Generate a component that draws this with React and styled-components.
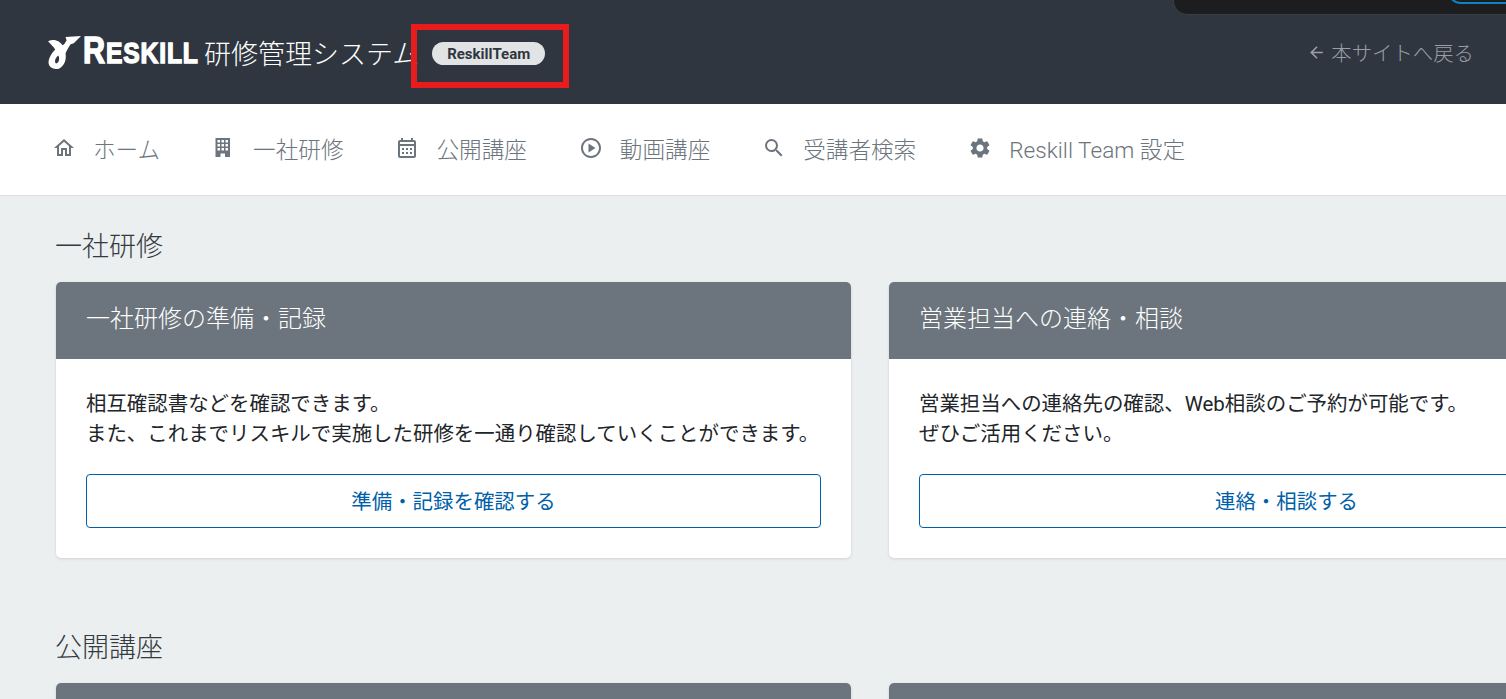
import styled, { createGlobalStyle } from "styled-components";
import { MdOutlineHome, MdOutlineCalendarMonth, MdOutlinePlayCircle, MdSearch, MdSettings, MdArrowBack } from "react-icons/md";

const GlobalStyle = createGlobalStyle`
    html, body {
        margin: 0;
        padding: 0;
        height: 100%;
        overflow: hidden;
    }
    body {
        font-family: Roboto, "Noto Sans CJK JP", sans-serif;
        background-color: #ebeff0;
    }
`;

const Page = styled.div`
    position: relative;
    height: 699px;
    overflow: hidden;
`;

const Header = styled.header`
    height: 104px;
    background-color: #2f3640;
    display: flex;
    align-items: center;
    justify-content: space-between;
    padding: 0 32px 0 48px;
`;

const Brand = styled.div`
    display: flex;
    align-items: center;
`;

const LogoMark = styled.svg`
    width: 33px;
    height: 33px;
    margin-right: 2px;
`;

const LogoWord = styled.span`
    display: inline-block;
    width: 114px;
    white-space: nowrap;
    font-family: "Liberation Sans", sans-serif;
    font-weight: 700;
    font-size: 29px;
    line-height: 32px;
    color: #fff;
    -webkit-text-stroke: 1.4px #fff;
    letter-spacing: 1px;
    transform: scaleX(0.85);
    transform-origin: left center;
    b {
        font-size: 36px;
    }
`;

const SiteName = styled.span`
    margin-left: 7px;
    font-size: 27px;
    font-weight: 300;
    color: #fff;
`;

const Badge = styled.span`
    margin: 3px 0 0 13px;
    width: 113px;
    height: 23px;
    border-radius: 12px;
    background-color: #e2e3e5;
    color: #2f3640;
    font-size: 15px;
    font-weight: 700;
    display: flex;
    align-items: center;
    justify-content: center;
`;

const BackLink = styled.a`
    display: flex;
    align-items: center;
    gap: 5px;
    font-size: 20.4px;
    font-weight: 300;
    color: #9a9fa6;
`;

const Nav = styled.nav`
    height: 92px;
    box-sizing: border-box;
    background-color: #fff;
    border-bottom: 1px solid #dfe2e5;
    display: flex;
    align-items: center;
    padding: 0 0 3px 52px;
    gap: 52px;
`;

const NavItem = styled.a`
    display: flex;
    align-items: center;
    gap: 17px;
    font-size: 22.6px;
    font-weight: 300;
    color: #6c757d;
    svg {
        flex: none;
    }
`;

const Main = styled.main`
    padding: 31px 0 0 56px;
`;

const SectionTitle = styled.h2`
    margin: 0 0 15px -1px;
    font-size: 27px;
    font-weight: 300;
    line-height: 40px;
    color: #343a40;
`;

const CardRow = styled.div`
    display: flex;
    gap: 38px;
    width: 1628px;
    margin-bottom: 70px;
`;

const Card = styled.section`
    width: 795px;
    flex: none;
    background-color: #fff;
    border-radius: 5px;
    box-shadow: 0 1px 3px rgba(0, 0, 0, 0.12);
    overflow: hidden;
`;

const CardHead = styled.h3`
    margin: 0;
    height: 77px;
    box-sizing: border-box;
    padding: 0 30px;
    background-color: #6c757d;
    color: #fff;
    font-size: 24px;
    font-weight: 300;
    line-height: 74px;
`;

const CardBody = styled.div`
    padding: 30px 30px 30px;
`;

const CardText = styled.p`
    margin: 0 0 25px;
    font-size: 20.45px;
    font-weight: 400;
    line-height: 30px;
    color: #212529;
`;

const OutlineButton = styled.a`
    display: flex;
    align-items: center;
    justify-content: center;
    height: 54px;
    box-sizing: border-box;
    padding-bottom: 3px;
    border: 1px solid #005fa8;
    border-radius: 4px;
    color: #005fa8;
    font-size: 20.45px;
    font-weight: 400;
`;

const Highlight = styled.div`
    position: absolute;
    left: 411px;
    top: 24px;
    width: 158px;
    height: 64px;
    box-sizing: border-box;
    border: 6px solid #e81c1c;
`;

const FloatingBar = styled.div`
    position: absolute;
    left: 1173px;
    top: -19px;
    width: 360px;
    height: 34px;
    box-sizing: border-box;
    background-color: #1d1d1f;
    border: 1px solid #3a3f45;
    border-radius: 14px;
`;

const FloatingPill = styled.div`
    position: absolute;
    left: 1447px;
    top: -26px;
    width: 80px;
    height: 30px;
    box-sizing: border-box;
    border: 2px solid #0a84c6;
    border-radius: 14px;
`;

const BuildingIcon = ({ size }) => (
    <svg width={size} height={size} viewBox="0 0 24 24">
        <path
            fill="currentColor"
            fillRule="evenodd"
            d="M3.500 2h14.500v19h-5v-3.500h-4.500v3.500h-5z M5.500 4v2.500h2.500v-2.500z M9.500 4v2.500h2.500v-2.500z M13.500 4v2.500h2.500v-2.500z M5.500 8v2.500h2.500v-2.500z M9.500 8v2.500h2.500v-2.500z M13.500 8v2.500h2.500v-2.500z M5.500 12v2.500h2.500v-2.500z M9.500 12v2.500h2.500v-2.500z M13.500 12v2.500h2.500v-2.500z"
        />
    </svg>
);

const cards = [
    {
        title: "一社研修の準備・記録",
        lines: ["相互確認書などを確認できます。", "また、これまでリスキルで実施した研修を一通り確認していくことができます。"],
        action: "準備・記録を確認する",
    },
    {
        title: "営業担当への連絡・相談",
        lines: ["営業担当への連絡先の確認、Web相談のご予約が可能です。", "ぜひご活用ください。"],
        action: "連絡・相談する",
    },
];

const navItems = [
    { label: "ホーム", Icon: MdOutlineHome },
    { label: "一社研修", Icon: BuildingIcon },
    { label: "公開講座", Icon: MdOutlineCalendarMonth },
    { label: "動画講座", Icon: MdOutlinePlayCircle },
    { label: "受講者検索", Icon: MdSearch },
    { label: "Reskill Team 設定", Icon: MdSettings },
];

const App = () => {
    return (
        <>
            <GlobalStyle />
            <Page>
                <Header>
                    <Brand>
                        <LogoMark viewBox="0 0 32 32">
                            <path
                                d="M0 5 C6 2 12 5 14 9 C16 8 17 6 18 4 L17 1 L32 0 L25 7 L22 8 C20 11 18 14 17 17 C18 23 16 29 11 31.500 C6 33 1 31 0.500 26 C0.500 21 4 16 7 13 C5 10 3 8 0 5 Z M10 19 C7 21 6 25 7.500 26.500 C9 27 10.500 25 10.800 22.500 C10.800 21 10.500 20 10 19 Z"
                                fill="#fff"
                                fillRule="evenodd"
                            />
                        </LogoMark>
                        <LogoWord>
                            <b>R</b>ESKILL
                        </LogoWord>
                        <SiteName>研修管理システム</SiteName>
                        <Badge>ReskillTeam</Badge>
                    </Brand>
                    <BackLink>
                        <MdArrowBack size={19} />
                        本サイトへ戻る
                    </BackLink>
                </Header>

                <Nav>
                    {navItems.map(({ label, Icon }) => (
                        <NavItem key={label}>
                            <Icon size={24} />
                            {label}
                        </NavItem>
                    ))}
                </Nav>

                <Main>
                    <SectionTitle>一社研修</SectionTitle>
                    <CardRow>
                        {cards.map((card) => (
                            <Card key={card.title}>
                                <CardHead>{card.title}</CardHead>
                                <CardBody>
                                    <CardText>
                                        {card.lines[0]}
                                        <br />
                                        {card.lines[1]}
                                    </CardText>
                                    <OutlineButton>{card.action}</OutlineButton>
                                </CardBody>
                            </Card>
                        ))}
                    </CardRow>

                    <SectionTitle>公開講座</SectionTitle>
                    <CardRow>
                        <Card>
                            <CardHead />
                        </Card>
                        <Card>
                            <CardHead />
                        </Card>
                    </CardRow>
                </Main>

                <FloatingBar />
                <FloatingPill />
                <Highlight />
            </Page>
        </>
    );
};

export default App;
